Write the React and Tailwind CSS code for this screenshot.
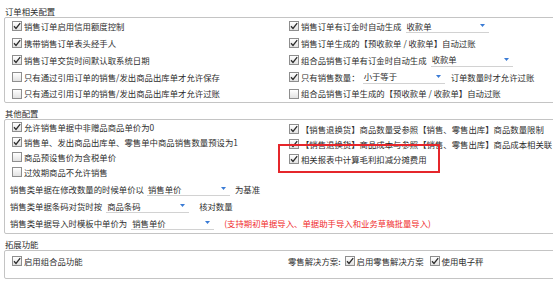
import React from 'react';

const Check = ({ checked }) => (
    <span className="w-[10px] h-[10px] shrink-0 border border-[#8e8e8e] bg-linear-to-b from-white to-[#e2e2e2] flex items-center justify-center">
        {checked && (
            <svg width="8" height="8" viewBox="0 0 8 8">
                <path d="M1 4.3 L3 6.4 L7.2 1.2" fill="none" stroke="#2c2c2c" strokeWidth="1.3" />
            </svg>
        )}
    </span>
);

const CheckRow = ({ checked, children, className = '' }) => (
    <div className={`flex items-center gap-[2px] ${className}`}>
        <Check checked={checked} />
        <span className="whitespace-nowrap">{children}</span>
    </div>
);

const Combo = ({ value, className = 'w-[83px]' }) => (
    <div className={`${className} h-[14px] shrink-0 border-b border-[#d2d2d2] flex items-center justify-between pl-[1px] pr-[4px]`}>
        <span>{value}</span>
        <svg width="5" height="3" viewBox="0 0 5 3">
            <path d="M0 0h5L2.5 3z" fill="#3a7bd5" />
        </svg>
    </div>
);

const Title = ({ children, h }) => (
    <div className={`${h} flex items-end pl-[1px] leading-[12px]`}>{children}</div>
);

const Box = ({ children, className = '' }) => (
    <div className={`border border-[#c4c4c4] rounded-[2px] pl-[7px] grid grid-cols-[277px_1fr] ${className}`}>
        {children}
    </div>
);

export default function App() {
    return (
        <div
            className="w-[553px] h-[287px] overflow-hidden bg-white relative text-[8.4px] text-[#2e2e2e] leading-none"
            style={{ fontFamily: '"Noto Sans CJK SC", "Noto Sans", sans-serif' }}
        >
            <div className="pl-[4px] w-[640px]">
                {/* 订单相关配置 */}
                <Title h="h-[17px]">订单相关配置</Title>
                <Box>
                    <div className="flex flex-col">
                        <CheckRow checked className="h-[16.8px]">销售订单启用信用额度控制</CheckRow>
                        <CheckRow checked className="h-[16.8px]">携带销售订单表头经手人</CheckRow>
                        <CheckRow checked className="h-[16.8px]">销售订单交货时间默认取系统日期</CheckRow>
                        <CheckRow className="h-[16.8px]">只有通过引用订单的销售/发出商品出库单才允许保存</CheckRow>
                        <CheckRow className="h-[16.8px]">只有通过引用订单的销售/发出商品出库单才允许过账</CheckRow>
                    </div>
                    <div className="flex flex-col">
                        <div className="h-[16.8px] flex items-center gap-[4px]">
                            <CheckRow checked>销售订单有订金时自动生成</CheckRow>
                            <Combo value="收款单" />
                        </div>
                        <CheckRow checked className="h-[16.8px]">销售订单生成的【预收款单 / 收款单】自动过账</CheckRow>
                        <div className="h-[16.8px] flex items-center gap-[4px]">
                            <CheckRow checked>组合品销售订单有订金时自动生成</CheckRow>
                            <Combo value="收款单" className="w-[82px]" />
                        </div>
                        <div className="h-[16.8px] flex items-center">
                            <CheckRow checked>只有销售数量：</CheckRow>
                            <Combo value="小于等于" className="w-[82px] ml-[3px]" />
                            <span className="ml-[6px] whitespace-nowrap">订单数量时才允许过账</span>
                        </div>
                        <CheckRow className="h-[16.8px]">组合品销售订单生成的【预收款单 / 收款单】自动过账</CheckRow>
                    </div>
                </Box>

                {/* 其他配置 */}
                <Title h="h-[16px]">其他配置</Title>
                <Box className="pb-[1px]">
                    <div className="flex flex-col">
                        <CheckRow checked className="h-[15px]">允许销售单据中非赠品商品单价为0</CheckRow>
                        <CheckRow checked className="h-[15px]">销售单、发出商品出库单、零售单中商品销售数量预设为1</CheckRow>
                        <CheckRow className="h-[15px]">商品预设售价为含税单价</CheckRow>
                        <CheckRow className="h-[15px]">过效期商品不允许销售</CheckRow>
                        <div className="h-[17px] mt-[1px] flex items-center ml-[-2px] whitespace-nowrap">
                            <span>销售类单据在修改数量的时候单价以</span>
                            <Combo value="销售单价" className="w-[83px] ml-[3px]" />
                            <span className="ml-[5px]">为基准</span>
                        </div>
                        <div className="h-[17px] flex items-center ml-[-2px] whitespace-nowrap">
                            <span>销售类单据条码对货时按</span>
                            <Combo value="商品条码" className="w-[83px] ml-[4px]" />
                            <span className="ml-[10px]">核对数量</span>
                        </div>
                        <div className="h-[17px] flex items-center ml-[-2px] whitespace-nowrap">
                            <span>销售类单据导入时模板中单价为</span>
                            <Combo value="销售单价" className="w-[83px] ml-[4px]" />
                            <span className="ml-[10px] text-[#f02c2c]">(支持期初单据导入、单据助手导入和业务草稿批量导入)</span>
                        </div>
                    </div>
                    <div className="flex flex-col pt-[2px]">
                        <CheckRow checked className="h-[15px]">【销售退换货】商品数量受参照【销售、零售出库】商品数量限制</CheckRow>
                        <CheckRow checked className="h-[15px]">【销售退换货】商品成本与参照【销售、零售出库】商品成本相关联</CheckRow>
                        <CheckRow checked className="h-[15px]">相关报表中计算毛利扣减分摊费用</CheckRow>
                    </div>
                </Box>

                {/* 拓展功能 */}
                <Title h="h-[16px]">拓展功能</Title>
                <Box className="pt-[2px] pb-[8px]">
                    <CheckRow checked className="h-[17px]">启用组合品功能</CheckRow>
                    <div className="h-[17px] flex items-center whitespace-nowrap">
                        <span className="ml-[-1px]">零售解决方案:</span>
                        <CheckRow checked className="ml-[4px]">启用零售解决方案</CheckRow>
                        <CheckRow checked className="ml-[6px]">使用电子秤</CheckRow>
                    </div>
                </Box>
            </div>

            {/* annotation */}
            <div className="absolute left-[278px] top-[144px] w-[162px] h-[29px] border-2 border-[#e5262b]" />
        </div>
    );
}
